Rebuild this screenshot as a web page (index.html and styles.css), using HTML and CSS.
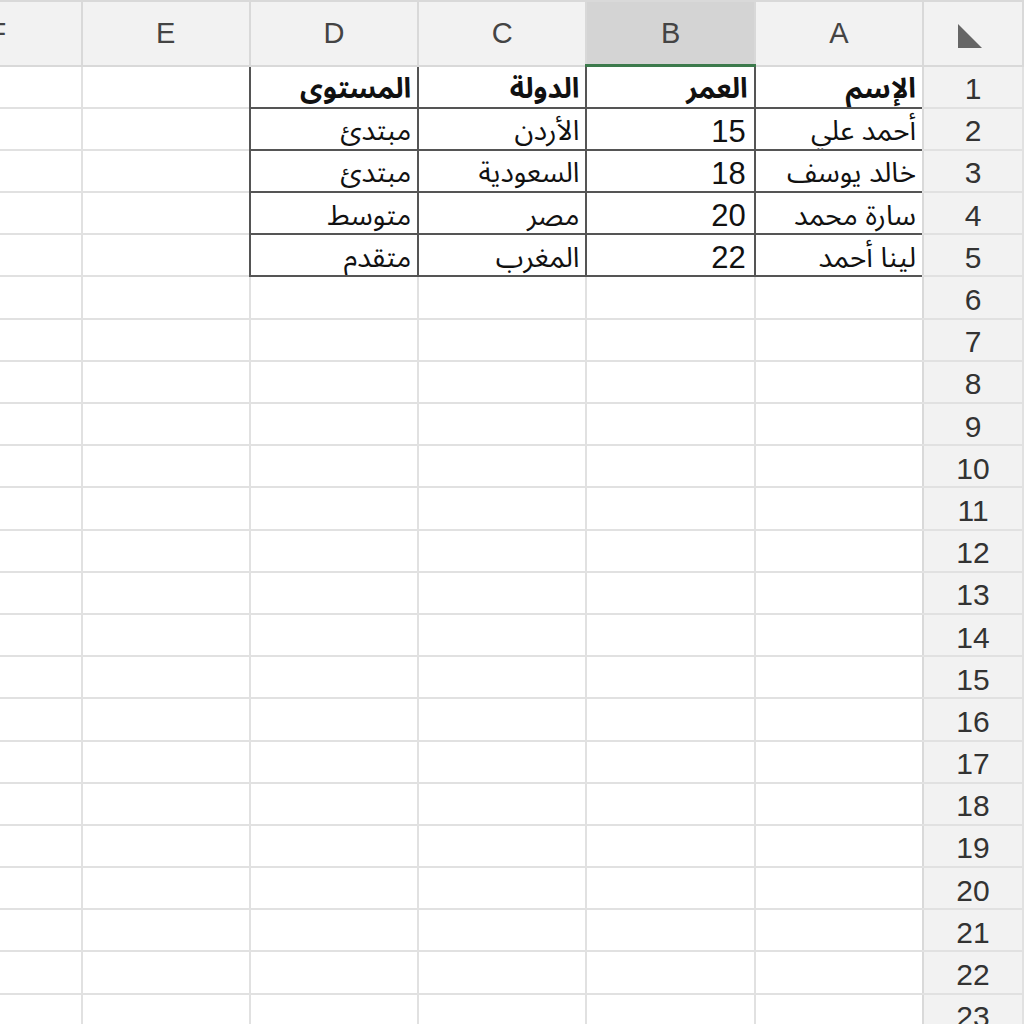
FILE: index.html
```html
<!DOCTYPE html>
<html lang="ar" dir="rtl">
<head>
    <meta charset="UTF-8">
    <meta name="viewport" content="width=device-width, initial-scale=1.0">
    <title>جدول الطلاب</title>
    <link rel="stylesheet" href="styles.css">
</head>
<body>
    <div class="sheet">
        <table class="grid">
            <colgroup>
                <col class="c-row">
                <col class="c-col"><col class="c-col"><col class="c-col">
                <col class="c-col"><col class="c-col"><col class="c-col">
            </colgroup>
            <thead>
                <tr class="head">
                    <th class="corner"><span class="tri"></span></th>
                    <th>A</th>
                    <th class="sel">B</th>
                    <th>C</th>
                    <th>D</th>
                    <th>E</th>
                    <th>F</th>
                </tr>
            </thead>
            <tbody id="rows">
                <tr>
                    <th class="num">1</th>
                    <td class="box bold">الإسم</td>
                    <td class="box bold">العمر</td>
                    <td class="box bold">الدولة</td>
                    <td class="box bold">المستوى</td>
                    <td></td><td></td>
                </tr>
                <tr>
                    <th class="num">2</th>
                    <td class="box">أحمد علي</td>
                    <td class="box n">15</td>
                    <td class="box">الأردن</td>
                    <td class="box">مبتدئ</td>
                    <td></td><td></td>
                </tr>
                <tr>
                    <th class="num">3</th>
                    <td class="box">خالد يوسف</td>
                    <td class="box n">18</td>
                    <td class="box">السعودية</td>
                    <td class="box">مبتدئ</td>
                    <td></td><td></td>
                </tr>
                <tr>
                    <th class="num">4</th>
                    <td class="box">سارة محمد</td>
                    <td class="box n">20</td>
                    <td class="box">مصر</td>
                    <td class="box">متوسط</td>
                    <td></td><td></td>
                </tr>
                <tr>
                    <th class="num">5</th>
                    <td class="box">لينا أحمد</td>
                    <td class="box n">22</td>
                    <td class="box">المغرب</td>
                    <td class="box">متقدم</td>
                    <td></td><td></td>
                </tr>
            </tbody>
        </table>
    </div>

    <script>
        // empty rows 6..24
        const body = document.getElementById("rows");
        for (let i = 6; i <= 24; i++) {
            const tr = document.createElement("tr");
            let html = `<th class="num">${i}</th>`;
            for (let c = 0; c < 6; c++) html += "<td></td>";
            tr.innerHTML = html;
            body.appendChild(tr);
        }
    </script>
</body>
</html>
```

FILE: styles.css
```css
body {
    margin: 0;
    padding: 0;
    background: #ffffff;
    overflow: hidden;
    height: 100vh;
    font-family: 'Liberation Sans', 'Noto Sans Arabic', 'DejaVu Sans', sans-serif;
}
.sheet {
    direction: rtl;
    width: 100%;
    height: 100%;
    overflow: hidden;
}
.grid {
    border-collapse: collapse;
    table-layout: fixed;
    width: 1110px;
}
.c-row {
    width: 100px;
}
.c-col {
    width: 168.3px;
}
.grid th,
.grid td {
    border: 2px solid #e1e1e1;
    padding: 0 6px;
    overflow: hidden;
    white-space: nowrap;
}
.head th {
    height: 62px;
    background: #f2f2f2;
    color: #444;
    font-weight: normal;
    font-size: 29px;
    text-align: center;
    border: 2px solid #d9d9d9;
}
.head th.sel {
    background: #d4d4d4;
    border-bottom: 3px solid #3c7a4c;
}
.corner {
    position: relative;
}
.tri {
    position: absolute;
    left: 34px;
    top: 22px;
    width: 0;
    height: 0;
    border-bottom: 24px solid #666;
    border-right: 24px solid transparent;
}
.grid tbody tr {
    height: 42.2px;
}
.grid td {
    font-size: 28px;
    color: #111;
    text-align: right;
    vertical-align: middle;
    line-height: 1;
    padding-top: 5px;
}
.grid td.n {
    font-size: 31px;
    padding-right: 8px;
}
.num {
    background: #f2f2f2;
    color: #333;
    font-weight: normal;
    font-size: 30px;
    text-align: center;
    line-height: 1;
    padding-top: 5px !important;
    border-left: 2px solid #d9d9d9 !important;
}
.grid td.box {
    border: 2px solid #555;
}
.bold {
    font-weight: bold;
}
```
